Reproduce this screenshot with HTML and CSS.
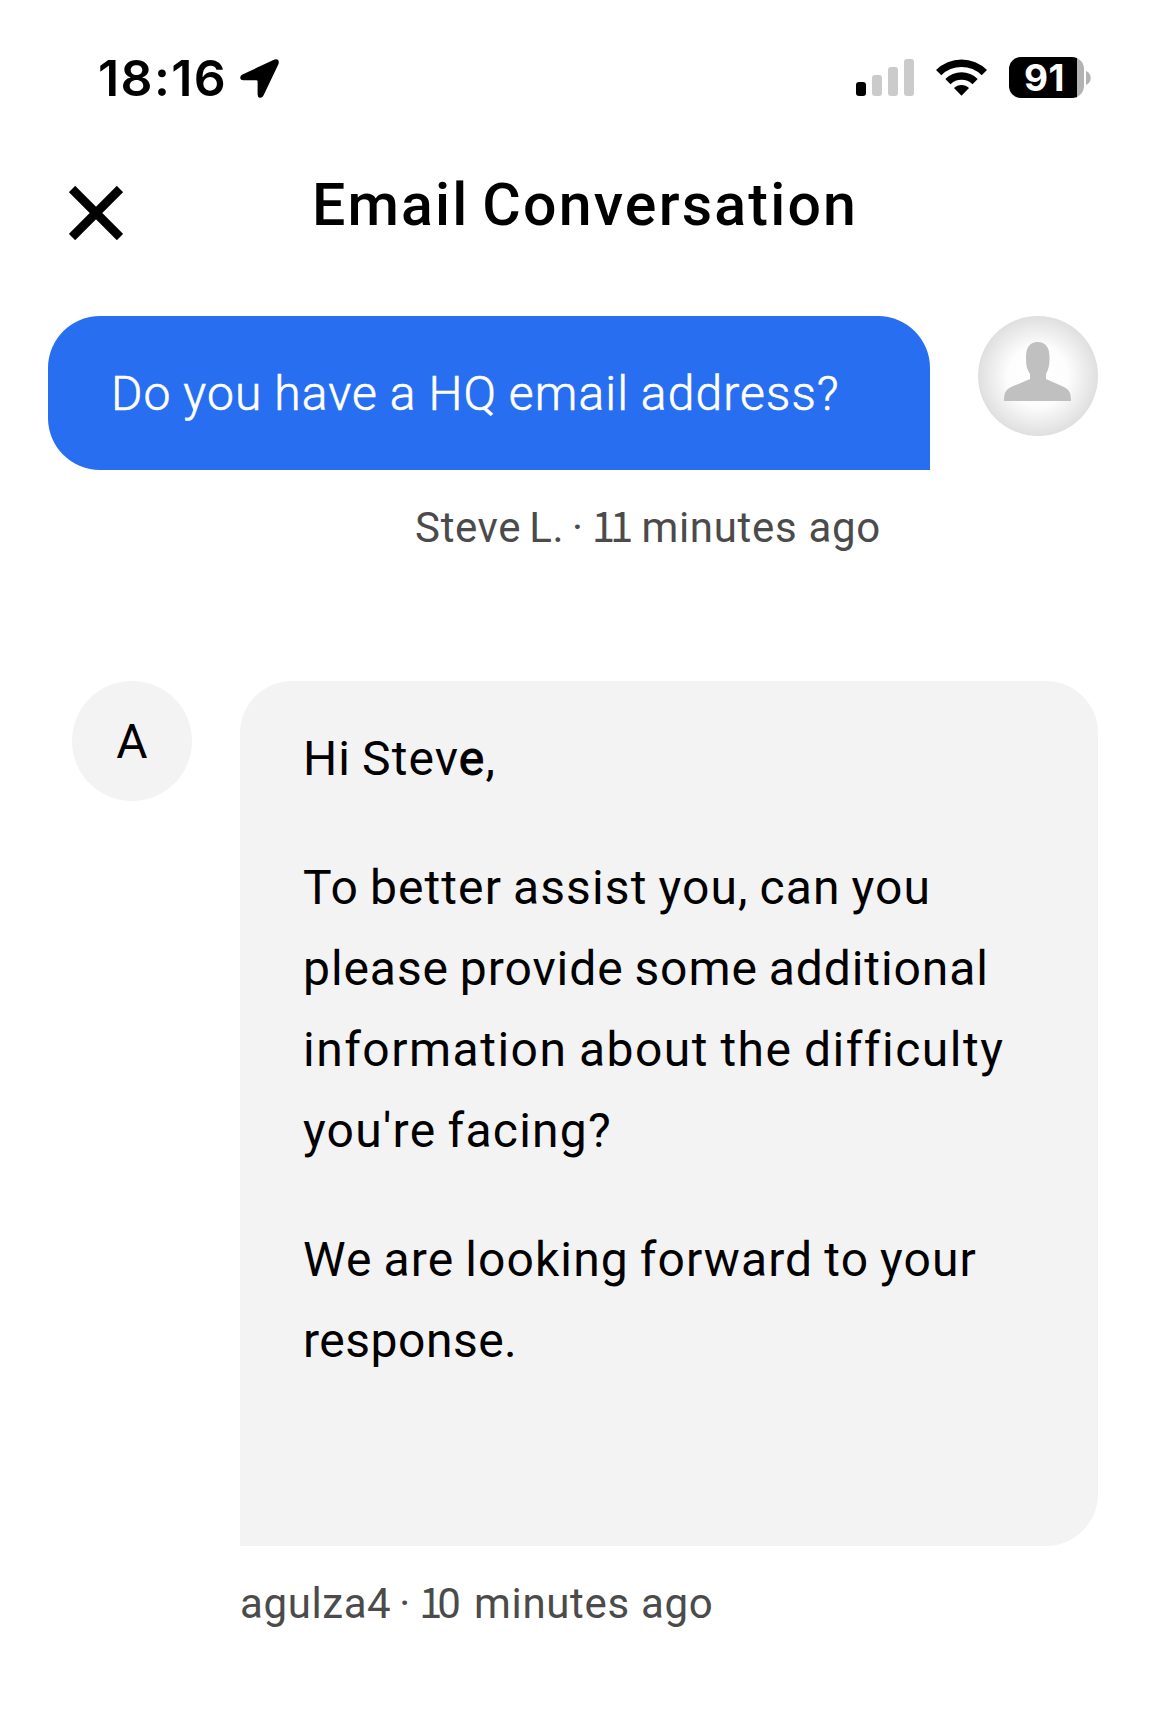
FILE: index.html
```html
<!DOCTYPE html>
<html lang="en">
<head>
  <meta charset="UTF-8" />
  <meta name="viewport" content="width=device-width, initial-scale=1.0"/>
  <title>Email Conversation</title>
  <link rel="stylesheet" href="styles.css">
</head>
<body>
  <div class="status-bar">
    <span class="time">18:16</span>
    <svg class="location" width="39" height="39" viewBox="0 0 39 39">
      <path d="M34.500 .4 Q39.800 -.6 38.500 5 L23.500 36.500 Q22 39 19.800 38.700 Q17.600 38.300 17.600 35.500 V22.600 Q17.600 21.300 16.300 21.300 H3.500 Q.4 21.300 .2 18.800 Q.1 16.700 2.500 15.500 Z"/>
    </svg>
    <div class="status-icons">
      <svg width="58" height="38" viewBox="0 0 58 38">
        <rect x="0" y="23" width="10" height="14" rx="3"/>
        <rect class="muted" x="16" y="16" width="10" height="21" rx="3"/>
        <rect class="muted" x="32" y="8" width="10" height="29" rx="3"/>
        <rect class="muted" x="48" y="0" width="10" height="37" rx="3"/>
      </svg>
      <svg class="wifi" width="51" height="38" viewBox="0 0 51 38">
        <path d="M0 11 A36 36 0 0 1 51 11 L45.700 16.300 A28.500 28.500 0 0 0 5.300 16.300 Z"/>
        <path d="M9.300 20 A23 23 0 0 1 41.700 20 L36.500 25.200 A15.800 15.800 0 0 0 14.500 25.200 Z"/>
        <path d="M18 29 A10.600 10.600 0 0 1 33 29 L25.500 36.800 Z"/>
      </svg>
      <div class="battery"><span>91</span></div>
      <svg class="nub" width="5" height="14" viewBox="0 0 5 14">
        <path d="M0 0 C6.300 2.500 6.300 11.500 0 14 Z"/>
      </svg>
    </div>
  </div>

  <div class="header">
    <svg class="close" width="54" height="54" viewBox="0 0 54 54">
      <path d="M3 3 L51 51 M51 3 L3 51"/>
    </svg>
    <h1>Email Conversation</h1>
  </div>

  <div class="message sent">
    <div class="content">
      <div class="bubble"><p>Do you have a HQ email address?</p></div>
      <div class="meta"><span class="author">Steve L. · </span><span class="one">11</span><span class="ago"> minutes ago</span></div>
    </div>
    <svg class="avatar" width="120" height="120" viewBox="0 0 120 120">
      <defs>
        <radialGradient id="shade">
          <stop offset="0" stop-color="#fff"/>
          <stop offset="0.5" stop-color="#fdfdfd"/>
          <stop offset="1" stop-color="#dfdfdf"/>
        </radialGradient>
      </defs>
      <circle cx="60" cy="60" r="60" fill="url(#shade)"/>
      <path fill="#c0c0c0" d="M59.500 26 C67.500 26 71.500 31 71.500 42 C71.500 50 70.500 53 68 58 V63 L86 71 C92 74 93 78 93 85 H26 C26 78 27 74 33 71 L52 63 V58 C49 53 48 50 48 42 C48 31 52 26 59.500 26 Z"/>
    </svg>
  </div>

  <div class="message received">
    <div class="avatar letter">A</div>
    <div class="content">
      <div class="bubble">
        <p>Hi Stev<span class="medium">e</span>,</p>
        <p>To better assist you, can you<br><span class="snug">please provide some additional</span><br><span class="wide">information about the difficulty</span><br><span class="loose">you're facing?</span></p>
        <p>We are looking forward to your<br><span class="tight">response.</span></p>
      </div>
      <div class="meta"><span class="author">agulza4 · </span><span class="one">1</span>0<span class="ago"> minutes ago</span></div>
    </div>
  </div>
</body>
</html>
```
FILE: styles.css
```css
body {
  font-family: Roboto, sans-serif;
  background: #fff;
  color: #000;
  margin: 0;
  padding: 48px 72px 0 48px;
}

.status-bar {
  display: flex;
  height: 60px;
  padding: 0 7px 0 50px;
}

.time {
  font: 600 50px/60px Inter, sans-serif;
  letter-spacing: 1.4px;
}

.location {
  margin: 11px 0 0 13px;
}

.status-icons {
  display: flex;
  align-items: center;
  height: 59px;
  margin-left: auto;
}

.status-icons .muted {
  fill: #cbcbcb;
}

.wifi {
  margin: 0 22px;
}

.battery {
  width: 75px;
  height: 41px;
  border-radius: 12px;
  background: linear-gradient(to right, #000 68px, #b3b3b3 68px);
  color: #fff;
  font: 700 37px/41px Inter, sans-serif;
  letter-spacing: 0.5px;
}

.battery span {
  margin-left: 15px;
}

.nub {
  margin-left: 2px;
  fill: #b3b3b3;
}

.header {
  display: grid;
  grid-template-columns: 1fr auto 1fr;
  align-items: center;
  height: 80px;
  margin: 57px -24px 0 0;
}

.close {
  margin: 16px 0 0 21px;
  stroke: #000;
  stroke-width: 9;
}

h1 {
  margin: 0;
  font-size: 59px;
  font-weight: 500;
  line-height: 80px;
  letter-spacing: 2.2px;
  word-spacing: -4px;
}

.message {
  display: flex;
  align-items: flex-start;
}

.sent {
  margin-top: 71px;
  gap: 48px;
}

.received {
  margin: 123px 0 0 24px;
  gap: 48px;
}

.content {
  flex: 1;
}

.bubble {
  box-sizing: border-box;
  padding: 37px 63px 36px;
  border-radius: 52px;
  font-size: 48px;
  line-height: 81px;
  letter-spacing: 1.1px;
  word-spacing: -2px;
  white-space: nowrap;
}

.bubble p {
  margin: 0 0 48px;
}

.bubble p:last-child {
  margin-bottom: 0;
}

.sent .bubble {
  background: #286ef0;
  color: #fff;
  font-weight: 300;
  letter-spacing: 1.1px;
  word-spacing: -1px;
  border-bottom-right-radius: 0;
  -webkit-text-stroke: 0.6px #fff;
}

.received .bubble {
  height: 865px;
  background: #f3f3f3;
  border-bottom-left-radius: 0;
}

.medium {
  -webkit-text-stroke: 1px #000;
}

.snug {
  letter-spacing: 0.93px;
}

.wide {
  letter-spacing: 1.5px;
}

.loose {
  letter-spacing: 1.25px;
}

.tight {
  letter-spacing: 0.5px;
}

.meta {
  margin-top: 28px;
  color: #4b4b4b;
  font-size: 42px;
  line-height: 60px;
  white-space: nowrap;
}

.sent .meta {
  padding-right: 49px;
  text-align: right;
}

.author {
  letter-spacing: 0.6px;
  word-spacing: -3px;
}

/* Footed numeral one */
.one {
  font-family: "Noto Sans CJK JP", sans-serif;
  line-height: 1;
  letter-spacing: -5px;
}

.ago {
  margin-left: 2px;
  letter-spacing: 0.7px;
}

.avatar {
  flex: none;
  width: 120px;
  height: 120px;
}

.letter {
  border-radius: 50%;
  background: #f3f3f3;
  font-size: 48px;
  line-height: 121px;
  text-align: center;
}
```
